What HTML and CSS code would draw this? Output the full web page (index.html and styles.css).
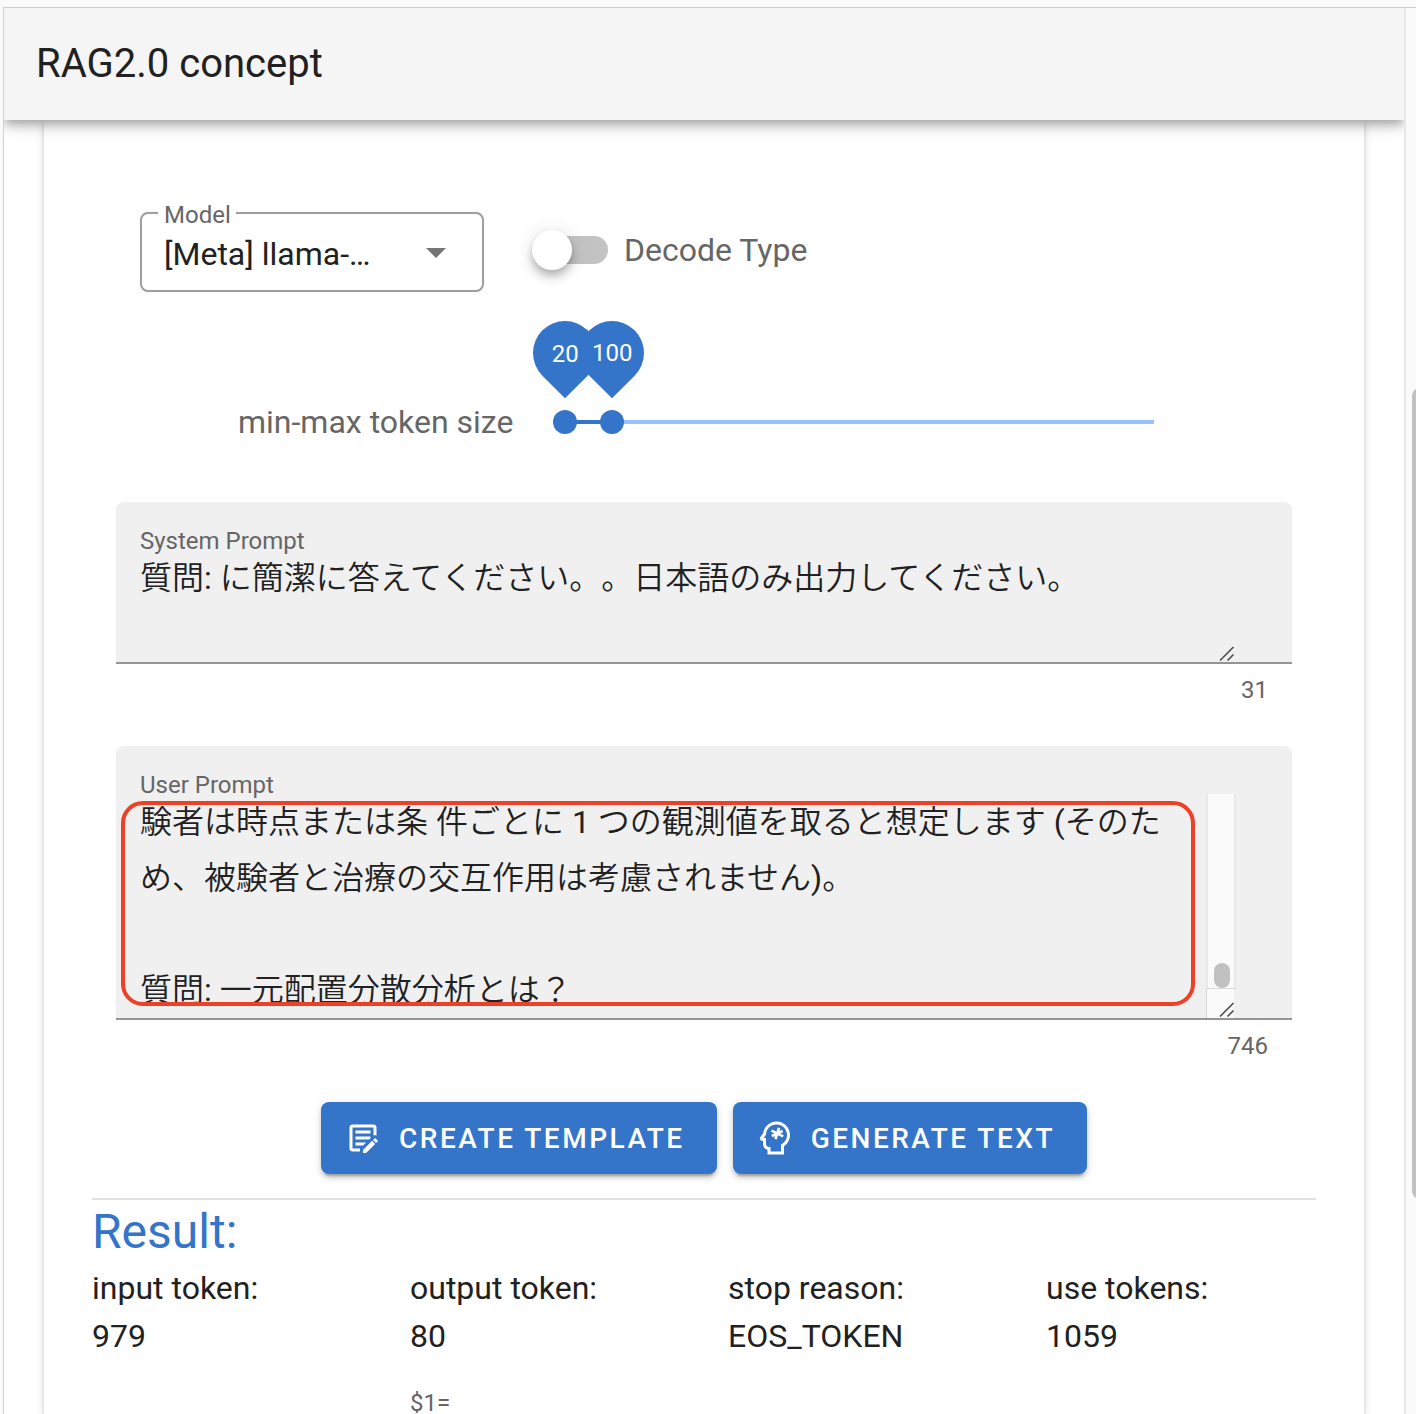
FILE: index.html
```html
<!DOCTYPE html>
<html lang="ja">
<head>
<meta charset="utf-8">
<title>RAG2.0 concept</title>
<link rel="stylesheet" href="styles.css">
</head>
<body>
<div class="window">
  <div class="app">
    <header class="app-bar"><h1 class="app-title">RAG2.0 concept</h1></header>
    <main class="main">
      <section class="card">
        <div class="options">
          <div class="select">
            <span class="select-label">Model</span>
            <span class="select-value">[Meta] llama-…</span>
            <span class="select-arrow"></span>
          </div>
          <div class="switch">
            <span class="switch-track"><span class="switch-thumb"></span></span>
            <span class="switch-label">Decode Type</span>
          </div>
        </div>

        <div class="slider">
          <span class="slider-label">min-max token size</span>
          <div class="slider-track">
            <div class="slider-fill"></div>
            <div class="slider-thumb" style="left: 12px"><span class="pin"><span class="pin-text pin-text-min">20</span></span></div>
            <div class="slider-thumb" style="left: 59px"><span class="pin"><span class="pin-text">100</span></span></div>
          </div>
        </div>

        <div class="field field-system">
          <div class="field-label">System Prompt</div>
          <div class="field-text">質問<span class="latin">: </span>に簡潔に答えてください。。日本語のみ出力してください。</div>
          <svg class="grip" viewBox="0 0 16 16"><path d="M1 14.500 14.500 1M8.500 14.500 14.500 8.500"/></svg>
        </div>
        <div class="counter">31</div>

        <div class="field field-user">
          <div class="field-label">User Prompt</div>
          <div class="field-text">験者は時点または条<span class="latin"> </span>件ごとに<span class="latin"> 1 </span>つの観測値を取ると想定します<span class="latin"> (</span>そのため、被験者と治療の交互作用は考慮されません<span class="latin">)</span>。<br><br>質問<span class="latin">: </span>一元配置分散分析とは？</div>
          <div class="area-scroll">
            <div class="area-track"><span class="area-thumb"></span></div>
            <div class="area-corner"></div>
          </div>
          <svg class="grip" viewBox="0 0 16 16"><path d="M1 14.500 14.500 1M8.500 14.500 14.500 8.500"/></svg>
          <div class="highlight"></div>
        </div>
        <div class="counter">746</div>

        <div class="actions">
          <button class="btn">
            <svg class="btn-icon" viewBox="0 0 24 24"><path d="M10 21H5C3.890 21 3 20.110 3 19V5C3 3.890 3.890 3 5 3H19C20.110 3 21 3.890 21 5V10.330C20.700 10.210 20.370 10.140 20.040 10.140C19.670 10.140 19.320 10.220 19 10.370V5H5V19H10.110L10 19.110V21M7 9H17V7H7V9M7 17H12.110L14 15.120V15H7V17M7 13H16.120L17 12.120V11H7V13M21.700 13.580L20.420 12.300C20.210 12.090 19.860 12.090 19.650 12.300L18.650 13.300L20.700 15.350L21.700 14.350C21.920 14.140 21.920 13.790 21.700 13.580M12 19.940V22H14.060L20.120 15.930L18.070 13.880L12 19.940Z"/></svg>
            <span class="btn-text">Create Template</span>
          </button>
          <button class="btn">
            <svg class="btn-icon" viewBox="0 0 24 24"><path d="M13 1C8.400 1 4.600 4.400 4.100 8.900L2.100 11.500C1.900 11.900 1.900 12.400 2 12.800C2.300 13.300 2.700 13.700 3.200 13.900H4V16C4 17.900 5.300 19.400 7 19.900V23H18V17.500C20.500 15.800 22 13 22 10C22 5 18 1 13 1M16 16.300V21H9V18H8C6.900 18 6 17.100 6 16V12H4.500L6 9.700C6.200 5.800 9.200 3 13 3C16.900 3 20 6.100 20 10C20 12.800 18.400 15.200 16 16.300Z"/><path class="spark" d="M14.700 5.200 12.300 12.800M9.700 7.100 17.500 10.900M9.900 10.600 17.100 7.400"/></svg>
            <span class="btn-text">Generate Text</span>
          </button>
        </div>

        <div class="result">
          <h2 class="result-title">Result:</h2>
          <dl class="stats">
            <div><dt>input token:</dt><dd>979</dd></div>
            <div><dt>output token:</dt><dd>80</dd><dd class="note">$1=</dd></div>
            <div><dt>stop reason:</dt><dd>EOS_TOKEN</dd></div>
            <div><dt>use tokens:</dt><dd>1059</dd></div>
          </dl>
        </div>
      </section>
    </main>
  </div>
  <aside class="page-scroll"><div class="page-thumb"></div></aside>
</div>
</body>
</html>
```

FILE: styles.css
```css
* { box-sizing: border-box; }

body {
  margin: 0;
  height: 1414px;
  overflow: hidden;
  padding: 7px 0 0 3px;
  background: #fafafa;
  color: #212121;
  font-family: Roboto, "Noto Sans CJK JP", sans-serif;
  font-size: 32px;
  line-height: 48px;
}

.window {
  display: flex;
  height: 1407px;
  border: solid #d0d0d0;
  border-width: 1px 0 0 1px;
  background: #fff;
}

.app {
  width: 1400px;
  overflow: hidden;
  display: flex;
  flex-direction: column;
}

.app-bar {
  flex: none;
  position: relative;
  z-index: 1;
  height: 112px;
  padding: 0 32px;
  display: flex;
  align-items: center;
  background: #f5f5f5;
  box-shadow: 0 4px 8px -2px rgba(0,0,0,.2), 0 8px 10px rgba(0,0,0,.14), 0 2px 20px rgba(0,0,0,.12);
}

.app-title { margin: 0; font-size: 40px; font-weight: 400; line-height: 60px; }

.main { flex: 1; padding: 0 40px; }

.card {
  height: 1294px;
  padding: 92px 48px 0;
  background: #fff;
  box-shadow: 0 6px 2px -4px rgba(0,0,0,.2), 0 4px 4px rgba(0,0,0,.14), 0 2px 10px rgba(0,0,0,.12);
}

.options { display: flex; gap: 52px; padding-left: 48px; }

.select {
  position: relative;
  width: 344px;
  height: 80px;
  padding: 3px 36px 0 22px;
  border: 2px solid #9e9e9e;
  border-radius: 8px;
  display: flex;
  align-items: center;
  justify-content: space-between;
}

.select-label {
  position: absolute;
  left: 16px;
  top: -12px;
  width: 78px;
  padding: 0 6px;
  background: #fff;
  color: #666;
  font-size: 24px;
  line-height: 26px;
}

.select-arrow {
  margin-bottom: 2px;
  border: solid transparent;
  border-width: 10px 10px 0;
  border-top-color: #757575;
}

.switch { display: flex; align-items: center; height: 76px; gap: 16px; color: #666; }

.switch-track {
  position: relative;
  width: 72px;
  height: 28px;
  border-radius: 14px;
  background: #c3c3c3;
}

.switch-thumb {
  position: absolute;
  left: -4px;
  top: -6px;
  width: 40px;
  height: 40px;
  border-radius: 50%;
  background: #fff;
  box-shadow: 0 4px 8px -2px rgba(0,0,0,.2), 0 8px 10px rgba(0,0,0,.14), 0 2px 20px rgba(0,0,0,.12);
}

.slider {
  display: flex;
  align-items: center;
  margin: 106px 162px 56px 146px;
  height: 48px;
}

.slider-label { width: 315px; color: #666; }
.slider-track { position: relative; flex: 1; height: 4px; background: #96c3fb; }
.slider-fill { margin-left: 12px; width: 47px; height: 4px; background: #3475c9; }

.slider-thumb {
  position: absolute;
  top: -10px;
  width: 24px;
  height: 24px;
  margin-left: -12px;
  border-radius: 50%;
  background: #3475c9;
}

.pin {
  position: absolute;
  left: -20px;
  top: -89px;
  width: 64px;
  height: 64px;
  border-radius: 50% 50% 0;
  background: #3475c9;
  transform: rotate(45deg);
  display: flex;
  align-items: center;
  justify-content: center;
}

.pin-text { transform: rotate(-45deg); color: #fff; font-size: 24px; line-height: 30px; }
.pin-text-min { padding-top: 2px; }

.field {
  position: relative;
  margin: 0 24px;
  padding: 20px 56px 0 24px;
  border-bottom: 2px solid #949494;
  border-radius: 8px 8px 0 0;
  background: #f0f0f0;
}

.field-system { height: 162px; }
.field-user { height: 274px; margin-top: 44px; }
.field-label { height: 28px; line-height: 38px; font-size: 24px; color: #666; }

.field-text {
  height: 114px;
  line-height: 56px;
  overflow: hidden;
  font-weight: 350;
  text-spacing-trim: space-all;
}

.latin { font-weight: 400; }

.field-user .field-text { height: 224px; width: 1040px; }

.grip {
  position: absolute;
  right: 57px;
  bottom: 0;
  width: 16px;
  height: 16px;
  fill: none;
  stroke: #505050;
  stroke-width: 1.7;
}

.area-scroll {
  position: absolute;
  right: 56px;
  top: 48px;
  width: 30px;
}

.area-track {
  height: 194px;
  padding: 169px 0 0 6px;
  border: solid #e8e8e8;
  border-width: 0 2px;
  background: #fafafa;
}

.area-thumb {
  display: block;
  width: 16px;
  height: 25px;
  border-radius: 8px;
  background: #c1c1c1;
}

.area-corner {
  height: 30px;
  border: solid #d9d9d9;
  border-width: 1px 0 0 1px;
  background: linear-gradient(90deg, #fafafa 27px, #efefef 27px);
}

.highlight {
  position: absolute;
  left: 5px;
  top: 55px;
  width: 1074px;
  height: 205px;
  border: 4px solid #ee4026;
  border-radius: 22px;
}

.counter {
  margin: 12px 48px 0;
  height: 26px;
  line-height: 28px;
  font-size: 24px;
  text-align: right;
  color: #666;
}

.actions { display: flex; justify-content: center; gap: 16px; margin: 44px 0 24px; }

.btn {
  display: flex;
  align-items: center;
  height: 72px;
  padding: 0 32px 0 24px;
  border: 0;
  border-radius: 8px;
  background: #3475c9;
  color: #fff;
  font: 500 28px/72px Roboto, sans-serif;
  letter-spacing: 2.5px;
  text-transform: uppercase;
  box-shadow: 0 6px 2px -4px rgba(0,0,0,.2), 0 4px 4px rgba(0,0,0,.14), 0 2px 10px rgba(0,0,0,.12);
}

.btn-icon { width: 36px; height: 36px; margin-right: 18px; fill: #fff; }
.btn-text { padding-top: 2px; }
.spark { fill: none; stroke: #fff; stroke-width: 1.8; }

.result { border-top: 2px solid #e0e0e0; }
.result-title { margin: 0; font-size: 48px; line-height: 64px; font-weight: 400; color: #3475c9; }
.stats { display: grid; grid-template-columns: repeat(4, 318px); margin: 0; }
.stats dd { margin: 0; }
.stats .note { margin-top: 28px; font-size: 24px; line-height: 30px; height: 26px; color: #666; }

.page-scroll {
  flex: 1;
  border-left: 2px solid #e8e8e8;
  background: #fafafa;
  overflow: hidden;
}

.page-thumb {
  margin: 380px 0 0 6px;
  width: 16px;
  height: 811px;
  border-radius: 8px;
  background: #c1c1c1;
}
```
